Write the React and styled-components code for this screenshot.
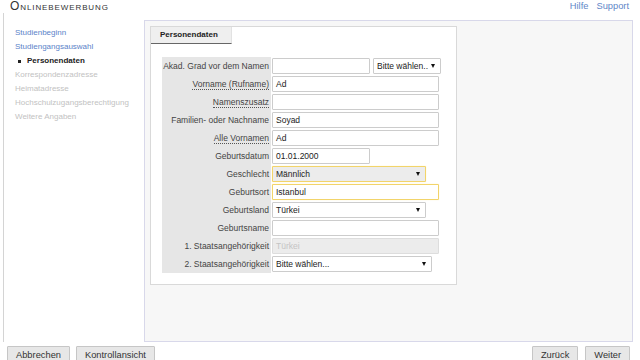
import React from 'react';
import styled, { createGlobalStyle } from 'styled-components';

const GlobalStyle = createGlobalStyle`
  html, body {
    margin: 0;
    padding: 0;
    background: #ffffff;
    overflow: hidden;
  }
  body {
    font-family: "Liberation Sans", Arial, sans-serif;
    color: #333333;
  }
`;

const Page = styled.div`
  width: 640px;
  height: 360px;
  display: flex;
  flex-direction: column;
`;

const Header = styled.header`
  height: 13px;
  display: flex;
  justify-content: space-between;
  align-items: center;
  padding: 0 11px 0 10px;
`;

const Title = styled.h1`
  margin: 0;
  font-size: 12px;
  font-weight: normal;
  font-variant: small-caps;
  letter-spacing: 0.9px;
  color: #333333;
  line-height: 13px;
`;

const Links = styled.nav`
  display: flex;
  gap: 8px;
  font-size: 9.3px;
  line-height: 13px;

  a {
    color: #5f86c8;
    text-decoration: none;
  }
`;

const Body = styled.div`
  display: flex;
  height: 332px;
  margin-left: 3px;
  border-left: 1px solid #d4d4d4;
`;

const Sidebar = styled.ul`
  list-style: none;
  margin: 0;
  padding: 13px 0 0 11px;
  width: 129px;
  font-size: 8px;
  line-height: 14px;
`;

const NavItem = styled.li`
  color: ${(p) =>
    p.$state === 'done' ? '#5b83c9' : p.$state === 'active' ? '#222222' : '#c2c2c2'};
  font-weight: ${(p) => (p.$state === 'active' ? 'bold' : 'normal')};
  padding-left: ${(p) => (p.$state === 'active' ? '12px' : '0')};
  position: relative;

  &::before {
    content: ${(p) => (p.$state === 'active' ? "''" : 'none')};
    position: absolute;
    left: 3px;
    top: 6px;
    width: 3px;
    height: 3px;
    background: #222222;
  }
`;

const Main = styled.main`
  box-sizing: border-box;
  margin-top: 7px;
  width: 489px;
  height: 322px;
  background: #f7f7f7;
  border: 1px solid #d8d8ea;
  padding: 5px 0 0 5px;
`;

const Card = styled.section`
  box-sizing: border-box;
  width: 307px;
  height: 259px;
  background: #ffffff;
  border: 1px solid #d9d9d9;
`;

const Tab = styled.div`
  box-sizing: border-box;
  width: 81px;
  height: 17px;
  background: #efefef;
  border-bottom: 1px solid #666666;
  border-right: 1px solid #e2e2e2;
  padding-left: 9px;
  font-size: 8px;
  font-weight: bold;
  line-height: 16px;
  color: #222222;
`;

const Form = styled.div`
  display: grid;
  grid-template-columns: 109px auto;
  grid-auto-rows: 18px;
  column-gap: 1px;
  margin: 13px 0 0 11px;
`;

const Label = styled.div`
  background: #e6e6e6;
  display: flex;
  align-items: center;
  justify-content: flex-end;
  padding-right: 2px;
  font-size: 8.5px;
  color: #444444;
  white-space: nowrap;

  span {
    border-bottom: ${(p) => (p.$hint ? '1px dotted #555555' : 'none')};
    line-height: 10px;
  }
`;

const Field = styled.div`
  display: flex;
  align-items: center;
  gap: 3px;
`;

const Input = styled.div`
  box-sizing: border-box;
  width: ${(p) => p.$w}px;
  height: 16px;
  border: 1px solid ${(p) => (p.$focus ? '#f2d46a' : p.$disabled ? '#dddddd' : '#cccccc')};
  box-shadow: ${(p) => (p.$focus ? '0 0 1px #f7e39a' : 'none')};
  border-radius: 1px;
  background: ${(p) => (p.$disabled ? '#ececec' : '#ffffff')};
  color: ${(p) => (p.$disabled ? '#c4c4c4' : '#222222')};
  font-size: 8.5px;
  line-height: 14px;
  padding-left: 3px;
`;

const Select = styled(Input)`
  display: flex;
  justify-content: space-between;
  align-items: center;
  padding-right: 5px;
  background: ${(p) => (p.$focus ? '#ececec' : '#ffffff')};
`;

const Arrow = styled.span`
  width: 0;
  height: 0;
  border-left: 2.5px solid transparent;
  border-right: 2.5px solid transparent;
  border-top: 4px solid #111111;
`;

const Footer = styled.footer`
  display: flex;
  justify-content: space-between;
  padding: 0 10px 0 7px;
  margin-top: 4px;
`;

const ButtonGroup = styled.div`
  display: flex;
  gap: ${(p) => p.$gap}px;
`;

const Button = styled.button`
  box-sizing: border-box;
  height: 18px;
  padding: 0 8px;
  background: #e7e7e7;
  border: 1px solid #c6c6c6;
  border-radius: 1px;
  font-family: "Liberation Sans", Arial, sans-serif;
  font-size: 9.3px;
  color: #333333;
  line-height: 16px;
`;

const nav = [
  ['Studienbeginn', 'done'],
  ['Studiengangsauswahl', 'done'],
  ['Personendaten', 'active'],
  ['Korrespondenzadresse', 'todo'],
  ['Heimatadresse', 'todo'],
  ['Hochschulzugangsberechtigung', 'todo'],
  ['Weitere Angaben', 'todo'],
];

const SelectBox = ({ w, value, focus }) => (
  <Select $w={w} $focus={focus}>
    <span>{value}</span>
    <Arrow />
  </Select>
);

export default function App() {
  return (
    <Page>
      <GlobalStyle />
      <Header>
        <Title>Onlinebewerbung</Title>
        <Links>
          <a href="#hilfe">Hilfe</a>
          <a href="#support">Support</a>
        </Links>
      </Header>
      <Body>
        <Sidebar>
          {nav.map(([text, state]) => (
            <NavItem key={text} $state={state}>
              {text}
            </NavItem>
          ))}
        </Sidebar>
        <Main>
          <Card>
            <Tab>Personendaten</Tab>
            <Form>
              <Label><span>Akad. Grad vor dem Namen</span></Label>
              <Field>
                <Input $w={98} />
                <SelectBox w={68} value="Bitte wählen.." />
              </Field>

              <Label $hint><span>Vorname (Rufname)</span></Label>
              <Field><Input $w={167}>Ad</Input></Field>

              <Label $hint><span>Namenszusatz</span></Label>
              <Field><Input $w={167} /></Field>

              <Label><span>Familien- oder Nachname</span></Label>
              <Field><Input $w={167}>Soyad</Input></Field>

              <Label $hint><span>Alle Vornamen</span></Label>
              <Field><Input $w={167}>Ad</Input></Field>

              <Label><span>Geburtsdatum</span></Label>
              <Field><Input $w={98}>01.01.2000</Input></Field>

              <Label><span>Geschlecht</span></Label>
              <Field><SelectBox w={154} value="Männlich" focus /></Field>

              <Label><span>Geburtsort</span></Label>
              <Field><Input $w={167} $focus>Istanbul</Input></Field>

              <Label><span>Geburtsland</span></Label>
              <Field><SelectBox w={154} value="Türkei" /></Field>

              <Label><span>Geburtsname</span></Label>
              <Field><Input $w={167} /></Field>

              <Label><span>1. Staatsangehörigkeit</span></Label>
              <Field><Input $w={167} $disabled>Türkei</Input></Field>

              <Label><span>2. Staatsangehörigkeit</span></Label>
              <Field><SelectBox w={160} value="Bitte wählen..." /></Field>
            </Form>
          </Card>
        </Main>
      </Body>
      <Footer>
        <ButtonGroup $gap={6}>
          <Button>Abbrechen</Button>
          <Button>Kontrollansicht</Button>
        </ButtonGroup>
        <ButtonGroup $gap={7}>
          <Button>Zurück</Button>
          <Button>Weiter</Button>
        </ButtonGroup>
      </Footer>
    </Page>
  );
}
